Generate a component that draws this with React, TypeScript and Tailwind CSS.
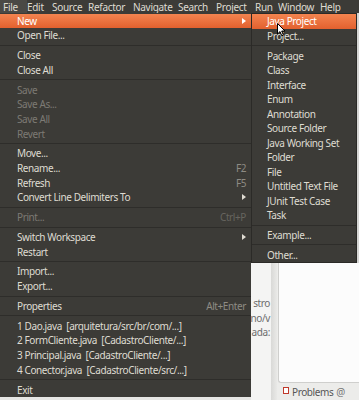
import React from "react";

type Item =
  | { sep: true }
  | {
      sep?: false;
      label: string;
      disabled?: boolean;
      shortcut?: string;
      arrow?: boolean;
      active?: boolean;
    };

const fileItems: Item[] = [
  { label: "New", arrow: true, active: true },
  { label: "Open File..." },
  { sep: true },
  { label: "Close" },
  { label: "Close All" },
  { sep: true },
  { label: "Save", disabled: true },
  { label: "Save As...", disabled: true },
  { label: "Save All", disabled: true },
  { label: "Revert", disabled: true },
  { sep: true },
  { label: "Move..." },
  { label: "Rename...", shortcut: "F2" },
  { label: "Refresh", shortcut: "F5" },
  { label: "Convert Line Delimiters To", arrow: true },
  { sep: true },
  { label: "Print...", disabled: true, shortcut: "Ctrl+P" },
  { sep: true },
  { label: "Switch Workspace", arrow: true },
  { label: "Restart" },
  { sep: true },
  { label: "Import..." },
  { label: "Export..." },
  { sep: true },
  { label: "Properties", shortcut: "Alt+Enter" },
  { sep: true },
  { label: "1 Dao.java  [arquitetura/src/br/com/...]" },
  { label: "2 FormCliente.java  [CadastroCliente/...]" },
  { label: "3 Principal.java  [CadastroCliente/...]" },
  { label: "4 Conector.java  [CadastroCliente/src/...]" },
  { sep: true },
  { label: "Exit" },
];

const newItems: Item[] = [
  { label: "Java Project", active: true },
  { label: "Project..." },
  { sep: true },
  { label: "Package" },
  { label: "Class" },
  { label: "Interface" },
  { label: "Enum" },
  { label: "Annotation" },
  { label: "Source Folder" },
  { label: "Java Working Set" },
  { label: "Folder" },
  { label: "File" },
  { label: "Untitled Text File" },
  { label: "JUnit Test Case" },
  { label: "Task" },
  { sep: true },
  { label: "Example..." },
  { sep: true },
  { label: "Other..." },
];

const menubar = [
  ["File", "w-[27px] pl-[3px] bg-[#4a4945]"],
  ["Edit", "w-[25px]"],
  ["Source", "w-[36px]"],
  ["Refactor", "w-[45px]"],
  ["Navigate", "w-[45px]"],
  ["Search", "w-[38px]"],
  ["Project", "w-[39px]"],
  ["Run", "w-[23px]"],
  ["Window", "w-[42px]"],
  ["Help", "w-[30px]"],
];

function Arrow({ light }: { light?: boolean }) {
  return (
    <svg width="4" height="6" viewBox="0 0 4 6" className="shrink-0">
      <path d="M0 0 L4 3 L0 6 Z" fill={light ? "#ffffff" : "#dfdbd2"} />
    </svg>
  );
}

function MenuRows({ items, pl }: { items: Item[]; pl: string }) {
  return (
    <>
      {items.map((it, i) =>
        it.sep ? (
          <div key={i} className="flex h-[5.3px] items-center">
            <div className="h-px w-full bg-[#2e2d2a]" />
          </div>
        ) : (
          <div
            key={i}
            className={`flex h-[14.6px] items-center justify-between pr-[5px] ${pl} ${
              it.active
                ? "bg-gradient-to-b from-[#f3844f] to-[#e2602e] text-white"
                : it.disabled
                  ? "text-[#7d7a74]"
                  : "text-[#dfdbd2]"
            }`}
          >
            <span className="whitespace-pre">{it.label}</span>
            {it.shortcut && (
              <span
                className={it.disabled ? "text-[#67655f]" : "text-[#8e8b84]"}
              >
                {it.shortcut}
              </span>
            )}
            {it.arrow && <Arrow light={it.active} />}
          </div>
        )
      )}
    </>
  );
}

export default function App() {
  return (
    <div
      className="relative h-[400px] w-[359px] overflow-hidden bg-[#e6e6e4] text-[10px] leading-none tracking-[-0.4px]"
      style={{ fontFamily: '"Noto Sans", sans-serif' }}
    >
      {/* menubar */}
      <div className="flex h-[13px] bg-[#3c3b37] text-[#dfdbd2] tracking-[-0.3px]">
        {menubar.map(([name, cls]) => (
          <div
            key={name}
            className={`flex h-full shrink-0 items-center whitespace-nowrap ${cls}`}
          >
            {name}
          </div>
        ))}
      </div>

      <div className="flex h-[387px]">
        {/* File menu */}
        <div className="flex h-[384px] w-[251px] flex-col bg-[#3c3b37] pt-[0.5px]">
          <MenuRows items={fileItems} pl="pl-[17px]" />
        </div>

        {/* right side: New submenu + eclipse behind */}
        <div className="flex w-[108px] flex-col">
          <div className="flex">
            <div className="flex h-[250px] w-[106px] flex-col border border-[#2b2a27] bg-[#3c3b37]">
              <MenuRows items={newItems} pl="pl-[15px]" />
            </div>
            <div className="w-[2px] bg-[#d6d6d4]" />
          </div>
          <div className="flex flex-1">
            <div className="flex w-[20px] flex-col items-end bg-[#f4f4f3] pt-[35px] pr-[1px] text-[#6d6d6d]">
              <div className="h-[14.5px] whitespace-nowrap">stro</div>
              <div className="h-[14.5px] whitespace-nowrap">no/v</div>
              <div className="h-[14.5px] whitespace-nowrap">ada:</div>
            </div>
            <div className="w-[6px] bg-gradient-to-r from-[#d9d9d7] to-[#e9e9e7]" />
            <div className="flex flex-1 flex-col bg-[#ececea]">
              <div className="ml-[1px] h-[120px] rounded-bl-[3px] border-b border-l border-[#cfcfcd] bg-[#fcfcfc]" />
              <div className="flex items-start gap-[3px] pl-[6px] pt-[4px] text-[#555]">
                <div className="h-[7px] w-[6px] border border-[#c0392b] bg-white" />
                <span>Problems</span>
                <span className="text-[#777]">@</span>
              </div>
            </div>
          </div>
        </div>
      </div>

      {/* mouse pointer over Java Project */}
      <svg
        width="9"
        height="14"
        viewBox="0 0 9 14"
        className="absolute left-[277px] top-[23px]"
      >
        <path
          d="M0.5 0.5 L0.5 11 L3 8.6 L4.8 12.8 L6.4 12.1 L4.7 8 L8 8 Z"
          fill="#ffffff"
          stroke="#000000"
          strokeWidth="1"
          strokeLinejoin="round"
        />
      </svg>
    </div>
  );
}
